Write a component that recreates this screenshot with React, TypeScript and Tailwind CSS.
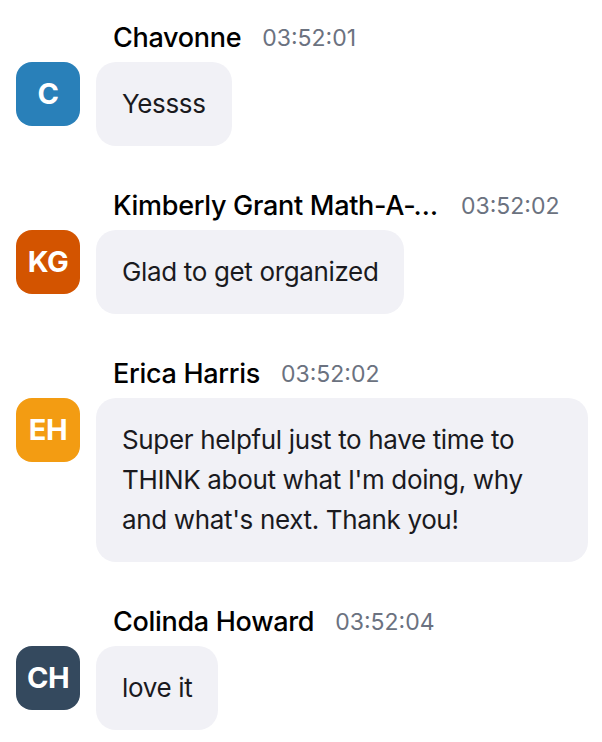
import React from 'react';

interface Message {
  name: string;
  initials: string;
  color: string;
  time: string;
  text: string;
}

const messages: Message[] = [
  { name: 'Chavonne', initials: 'C', color: 'bg-[#2980b9]', time: '03:52:01', text: 'Yessss' },
  {
    name: 'Kimberly Grant Math-A-Thon',
    initials: 'KG',
    color: 'bg-[#d35400]',
    time: '03:52:02',
    text: 'Glad to get organized',
  },
  {
    name: 'Erica Harris',
    initials: 'EH',
    color: 'bg-[#f39c12]',
    time: '03:52:02',
    text: "Super helpful just to have time to THINK about what I'm doing, why and what's next. Thank you!",
  },
  { name: 'Colinda Howard', initials: 'CH', color: 'bg-[#34495e]', time: '03:52:04', text: 'love it' },
];

const App: React.FC = () => {
  return (
    <div
      className="w-[602px] h-[742px] bg-white overflow-hidden pt-[22px] flex flex-col gap-[44px]"
      style={{ fontFamily: 'Inter, "Noto Sans", sans-serif' }}
    >
      {messages.map((m, index) => (
        <div key={index} className="flex flex-col gap-2">
          <div className="flex items-center h-8 pl-[113px] gap-[21px]">
            <span className="max-w-[327px] truncate text-[27px] font-medium text-black tracking-[-0.3px]">
              {m.name}
            </span>
            <span className="text-[23px] text-[#6b7280] shrink-0">{m.time}</span>
          </div>
          <div className="flex items-start gap-4 pl-4">
            <div
              className={`w-16 h-16 shrink-0 rounded-[16px] ${m.color} flex items-center justify-center text-white text-[29px] font-bold tracking-[-0.5px]`}
            >
              {m.initials}
            </div>
            <div className="max-w-[492px] bg-[#f1f1f6] rounded-[20px] px-[26px] py-[22px] text-[26px] tracking-[-0.35px] leading-[40px] text-[#1a1a1e]">
              {m.text}
            </div>
          </div>
        </div>
      ))}
    </div>
  );
};

export default App;
